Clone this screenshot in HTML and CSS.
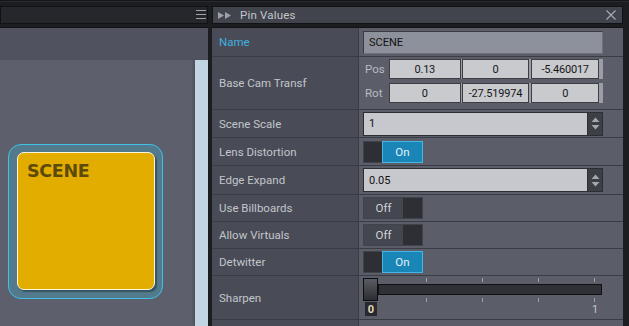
FILE: index.html
```html
<!DOCTYPE html>
<html>
<head>
<meta charset="utf-8">
<link rel="stylesheet" href="styles.css">
</head>
<body>
<div class="app">
  <div class="main">
    <section class="left">
      <div class="hdr left-hdr">
        <svg class="menu" width="10" height="10" viewBox="0 0 10 10"><path d="M0 0.5H10M0 4.5H10M0 8.5H10" stroke="#9fa2a9" stroke-width="1"/></svg>
      </div>
      <div class="pane left-pane">
        <div class="canvas-top"></div>
        <div class="canvas">
          <div class="node-wrap">
            <div class="node"><span class="node-title">SCENE</span></div>
          </div>
          <div class="strip"></div>
        </div>
      </div>
    </section>
    <section class="right">
      <div class="hdr right-hdr">
        <svg class="ff" width="13" height="7" viewBox="0 0 13 7"><path d="M0 0L6 3.5L0 7Z M7 0L13 3.5L7 7Z" fill="#9ea0a7"/></svg>
        <span class="hdr-title">Pin Values</span>
        <svg class="close" width="10" height="10" viewBox="0 0 10 10"><path d="M0.5 0.5L9.5 9.5M9.5 0.5L0.5 9.5" stroke="#a7a9af" stroke-width="1.2"/></svg>
      </div>
      <div class="pane props">
        <div class="row h29">
          <div class="lbl active">Name</div>
          <div class="val"><div class="field dim">SCENE</div></div>
        </div>
        <div class="row h53">
          <div class="lbl">Base Cam Transf</div>
          <div class="val vec">
            <div class="vrow"><span class="vlbl">Pos</span><div class="cells"><div class="cell">0.13</div><div class="cell">0</div><div class="cell">-5.460017</div></div></div>
            <div class="vrow"><span class="vlbl">Rot</span><div class="cells"><div class="cell">0</div><div class="cell">-27.519974</div><div class="cell">0</div></div></div>
          </div>
        </div>
        <div class="row h28">
          <div class="lbl">Scene Scale</div>
          <div class="val"><div class="num"><div class="field light">1</div><div class="spin"><svg width="9" height="13" viewBox="0 0 9 13"><path d="M4.5 0.5L8.5 5H0.5Z M0.5 8H8.5L4.5 12.5Z" fill="#a3a6ac"/><path d="M0 6.5H9" stroke="#3d3f46"/></svg></div></div></div>
        </div>
        <div class="row h28">
          <div class="lbl">Lens Distortion</div>
          <div class="val"><div class="toggle on"><span class="tk"></span><span class="tv">On</span></div></div>
        </div>
        <div class="row h29">
          <div class="lbl">Edge Expand</div>
          <div class="val"><div class="num"><div class="field light">0.05</div><div class="spin"><svg width="9" height="13" viewBox="0 0 9 13"><path d="M4.5 0.5L8.5 5H0.5Z M0.5 8H8.5L4.5 12.5Z" fill="#a3a6ac"/><path d="M0 6.5H9" stroke="#3d3f46"/></svg></div></div></div>
        </div>
        <div class="row h27">
          <div class="lbl">Use Billboards</div>
          <div class="val"><div class="toggle off"><span class="tv">Off</span><span class="tk"></span></div></div>
        </div>
        <div class="row h27">
          <div class="lbl">Allow Virtuals</div>
          <div class="val"><div class="toggle off"><span class="tv">Off</span><span class="tk"></span></div></div>
        </div>
        <div class="row h27">
          <div class="lbl">Detwitter</div>
          <div class="val"><div class="toggle on"><span class="tk"></span><span class="tv">On</span></div></div>
        </div>
        <div class="row h44">
          <div class="lbl">Sharpen</div>
          <div class="val slider-val">
            <div class="slider">
              <div class="ticks top"><i></i><i></i><i></i><i></i></div>
              <div class="track-line"><div class="handle"></div><div class="track"></div></div>
              <div class="ticks bottom"><i></i><i></i><i></i><i></i></div>
              <div class="marks"><span class="m0">0</span><span class="m1">1</span></div>
            </div>
          </div>
        </div>
        <div class="row last">
          <div class="lbl"></div>
          <div class="val"></div>
        </div>
      </div>
    </section>
  </div>
</div>
</body>
</html>
```
FILE: styles.css
```css
* { box-sizing: border-box; }
html, body { margin: 0; padding: 0; }
body {
  width: 629px;
  height: 326px;
  overflow: hidden;
  background: #1c1d21;
  font-family: Roboto, "Liberation Sans", sans-serif;
  font-size: 11px;
}
.app {
  height: 326px;
  padding-top: 6px;
  background: linear-gradient(#141517 0 1px, #2a2b30 1px 2px, #1c1d21 2px);
}
.main {
  display: flex;
  gap: 4px;
  height: 320px;
}
.left { width: 208px; flex: none; display: flex; flex-direction: column; }
.right { flex: 1; min-width: 0; margin-right: 6px; display: flex; flex-direction: column; }
.hdr {
  height: 18px;
  border: 1px solid #111214;
  display: flex;
  align-items: center;
}
.left-hdr { background: #26272c; justify-content: flex-end; padding-right: 1px; }
.right-hdr { background: #41444c; padding: 0 6px 0 5px; color: #c4c6cb; }
.ff { margin-right: 9px; }
.hdr-title { flex: 1; font-size: 11.5px; letter-spacing: 0.2px; }
.pane {
  margin-top: 3px;
  flex: 1;
  border-top: 1px solid #111214;
}
.left-pane { display: flex; flex-direction: column; background: #5d606c; }
.canvas-top { height: 32px; background: #50535f; }
.canvas { flex: 1; position: relative; }
.strip {
  position: absolute;
  right: 0; top: 0; bottom: 0;
  width: 13px;
  background: #c1d5e3;
  box-shadow: -2px 0 2px rgba(0,0,0,0.15);
}
.node-wrap {
  position: absolute;
  left: 8px; top: 84px;
  width: 155px; height: 155px;
  border: 1px solid #3ec3e6;
  border-radius: 13px;
  background: #527a8c;
  padding: 7px 0 0 8px;
}
.node {
  width: 138px; height: 138px;
  background: #e3ad00;
  border: 1px solid #fff6d8;
  border-radius: 7px;
  box-shadow: 2px 2px 1px rgba(20,40,50,0.45);
  padding: 8px 0 0 9px;
}
.node-title {
  font-family: "DejaVu Sans", sans-serif;
  font-weight: bold;
  font-size: 17.5px;
  color: #5c4a0c;
  letter-spacing: -0.3px;
}
.props { background: #5b5e69; display: flex; flex-direction: column; }
.row {
  display: flex;
  border-bottom: 1px solid #3b3d45;
}
.h27 { height: 27px; }
.h28 { height: 28px; }
.h29 { height: 29px; }
.h44 { height: 44px; }
.h53 { height: 53px; }
.last { flex: 1; border-bottom: none; }
.lbl {
  width: 147px;
  flex: none;
  background: #494c56;
  border-right: 1px solid #3b3d45;
  color: #c3c5cb;
  padding-left: 7px;
  display: flex;
  align-items: center;
  font-size: 11.5px;
}
.lbl.active { color: #3fb1e2; }
.val {
  flex: 1;
  min-width: 0;
  display: flex;
  align-items: center;
  padding-left: 4px;
  padding-right: 20px;
}
.field {
  height: 23px;
  flex: 1;
  display: flex;
  align-items: center;
  padding-left: 5px;
  color: #111;
  font-size: 11px;
}
.field.dim {
  background: #8d919b;
  border: 1px solid #3a3c43;
  border-right-color: #6e717a;
  border-bottom-color: #6e717a;
}
.num { flex: 1; display: flex; height: 24px; }
.field.light {
  height: 24px;
  background: #c7c8cd;
  border: 1px solid #2c2e33;
}
.spin {
  width: 15px;
  background: #3d3f46;
  border: 1px solid #2c2e33;
  border-left: none;
  display: flex;
  align-items: center;
  justify-content: center;
}
.vec {
  flex-direction: column;
  align-items: stretch;
  justify-content: flex-start;
  padding-top: 2px;
  gap: 4px;
}
.vrow { display: flex; align-items: center; height: 20px; }
.vlbl { width: 26px; flex: none; color: #b9bbc1; font-size: 11.5px; padding-left: 2px; }
.cells {
  flex: 1;
  min-width: 0;
  display: flex;
  height: 20px;
  background: #9b9ea6;
  padding-right: 4px;
}
.cell {
  background: #c9cace;
  border: 1px solid #3c3e44;
  display: flex;
  align-items: center;
  justify-content: center;
  color: #15161a;
  font-size: 11px;
  letter-spacing: -0.2px;
  min-width: 0;
}
.cell:nth-child(1) { flex: 72 1 0; }
.cell:nth-child(2) { flex: 68 1 0; margin-left: 1px; }
.cell:nth-child(3) { flex: 68 1 0; margin-left: 2px; }
.toggle {
  width: 60px;
  height: 22px;
  display: flex;
  background: #2e2f34;
  border: 1px solid #41434a;
  font-size: 11.5px;
}
.toggle .tk { flex: none; }
.toggle.on .tk { width: 18px; }
.toggle.on .tv {
  flex: 1;
  background: #1a86b8;
  border: 1px solid #43b6e6;
  margin: -1px -1px -1px 0;
  color: #e6f2f8;
  display: flex; align-items: center; justify-content: center;
}
.toggle.off .tv {
  width: 39px;
  background: #44474f;
  color: #d2d4d8;
  display: flex; align-items: center; justify-content: center;
}
.toggle.off .tk { flex: 1; }
.slider-val { align-items: flex-start; padding-top: 2px; }
.slider { flex: 1; position: relative; height: 40px; }
.ticks { position: absolute; left: 0; right: 0; height: 4px; }
.ticks.top { top: 0; }
.ticks.bottom { top: 20px; }
.ticks i {
  position: absolute;
  width: 1px; height: 4px;
  background: #9ea0a6;
}
.ticks i:nth-child(1) { left: 63px; }
.ticks i:nth-child(2) { left: 119px; }
.ticks i:nth-child(3) { left: 175px; }
.ticks i:nth-child(4) { left: 231px; }
.track-line { display: flex; align-items: center; height: 23px; }
.handle {
  width: 15px;
  height: 23px;
  border: 1px solid #0d0e10;
  background: linear-gradient(#5a5c63, #2c2d32);
  flex: none;
}
.track {
  flex: 1;
  height: 11px;
  background: #303137;
  border: 1.5px solid #0f1012;
  margin-right: 1px;
}
.marks { position: absolute; top: 24px; left: 0; right: 0; height: 14px; }
.m0 {
  position: absolute; left: 2px; top: 0;
  width: 12px; height: 14px;
  background: #28292d;
  color: #e8d8b8;
  font-size: 11px;
  display: flex; align-items: center; justify-content: center;
  font-weight: bold;
}
.m1 {
  position: absolute; left: 229px; top: 1px;
  color: #c2c6ca;
  font-size: 11px;
}
```
